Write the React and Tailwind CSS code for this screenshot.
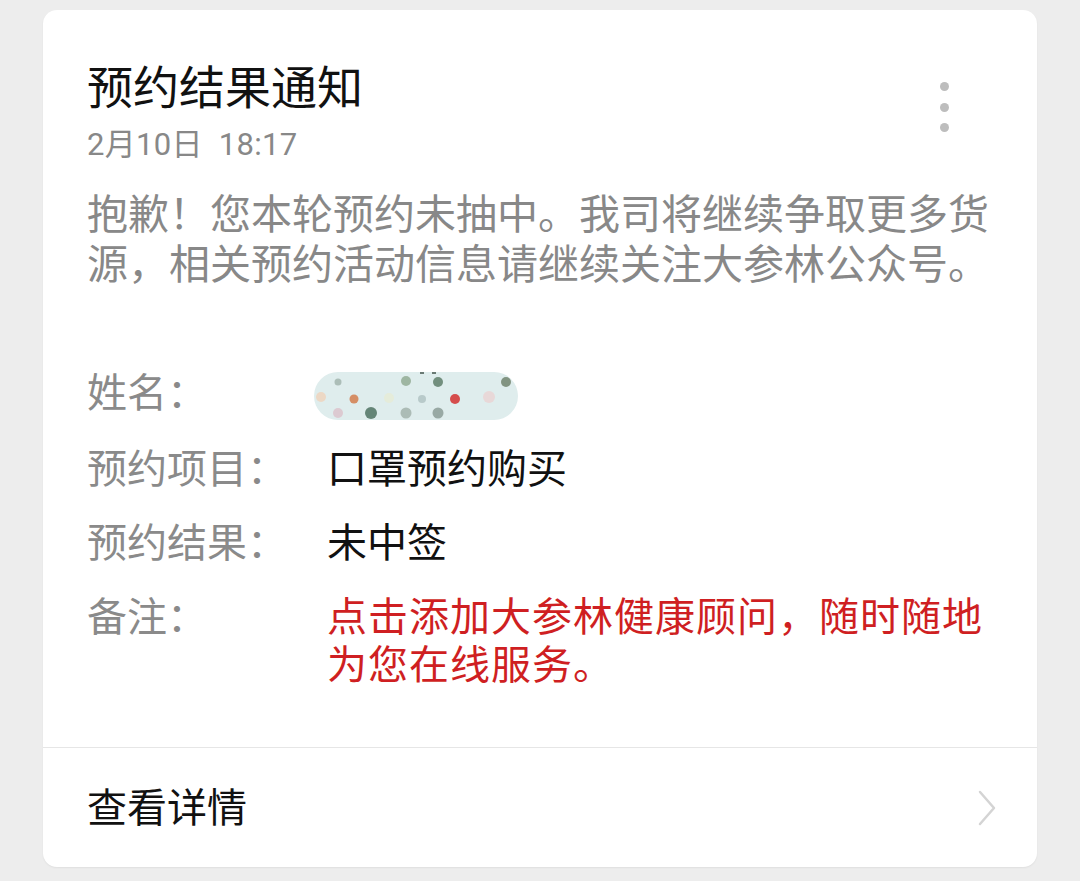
import React from "react";

const nameDots = [
  { x: 24, y: 10, r: 3.5, c: "#a3b5ae" },
  { x: 92, y: 9, r: 5, c: "#93ab94" },
  { x: 124, y: 10, r: 5, c: "#5f7e6a" },
  { x: 192, y: 10, r: 5, c: "#72846f" },
  { x: 7, y: 25, r: 5, c: "#efd3bd" },
  { x: 40, y: 27, r: 4.5, c: "#d47c4c" },
  { x: 75, y: 26, r: 5, c: "#e6ebd6" },
  { x: 108, y: 27, r: 4, c: "#b2c3c3" },
  { x: 141, y: 27, r: 5, c: "#d3302f" },
  { x: 175, y: 25, r: 6, c: "#ead3d3" },
  { x: 24, y: 41, r: 5, c: "#dcc3cb" },
  { x: 57, y: 41, r: 6, c: "#4f7262" },
  { x: 92, y: 41, r: 5.5, c: "#a3b3ab" },
  { x: 124, y: 41, r: 5.5, c: "#8c9c96" },
];

function BlurredName() {
  return (
    <svg width="204" height="48" viewBox="0 0 204 48" className="block">
      <rect x="0" y="0" width="204" height="48" rx="24" fill="#dfeded" />
      {nameDots.map((d, i) => (
        <circle key={i} cx={d.x} cy={d.y} r={d.r} fill={d.c} opacity="0.85" />
      ))}
      <rect x="106" y="0" width="4" height="2" fill="#6a7a74" />
      <rect x="118" y="0" width="4" height="2" fill="#6a7a74" />
    </svg>
  );
}

function Row({ label, children, className = "" }) {
  return (
    <div className={`flex ${className}`}>
      <div className="w-[240px] shrink-0 text-[40px] leading-[48px] text-[#8a8a8a]">{label}</div>
      <div className="flex-1 text-[40px] leading-[48px]">{children}</div>
    </div>
  );
}

export default function App() {
  return (
    <div
      className="min-h-[881px] bg-[#ededed] pt-[10px] pl-[43px]"
      style={{ fontFamily: 'Roboto, "Noto Sans CJK SC", sans-serif' }}
    >
      <div className="w-[994px] bg-white rounded-[14px] shadow-[0_1px_2px_rgba(0,0,0,0.06)]">
        <div className="pt-[50px] pl-[44px] pr-[45px]">
          {/* header */}
          <div className="flex justify-between items-start">
            <div>
              <div className="text-[46px] leading-[56px] text-[#111]">预约结果通知</div>
              <div className="mt-[9px] text-[31px] leading-[40px] text-[#888] tracking-[0.3px]">
                2月10日&nbsp;&nbsp;18:17
              </div>
            </div>
            <div className="flex flex-col gap-[11.5px] pt-[22px] mr-[43px]">
              <span className="w-[9px] h-[9px] rounded-full bg-[#bdbdbd]" />
              <span className="w-[9px] h-[9px] rounded-full bg-[#bdbdbd]" />
              <span className="w-[9px] h-[9px] rounded-full bg-[#bdbdbd]" />
            </div>
          </div>

          <p className="mt-[25px] text-[41px] leading-[50px] text-[#888]">
            抱歉！您本轮预约未抽中。我司将继续争取更多货源，相关预约活动信息请继续关注大参林公众号。
          </p>

          {/* fields */}
          <div className="mt-[80px] flex flex-col gap-[26px]">
            <Row label="姓名：">
              <div className="ml-[-13px] pt-[2px]">
                <BlurredName />
              </div>
            </Row>
            <Row label="预约项目：">
              <span className="text-[#111]">口罩预约购买</span>
            </Row>
            <Row label="预约结果：">
              <span className="text-[#111]">未中签</span>
            </Row>
            <Row label="备注：">
              <span className="text-[#cf1f22] tracking-[1px]">
                点击添加大参林健康顾问，随时随地为您在线服务。
              </span>
            </Row>
          </div>
        </div>

        <div className="mt-[57px] border-t border-[#e6e6e6]" />

        <div className="h-[119px] flex items-center justify-between pl-[44px] pr-[40px]">
          <span className="text-[40px] leading-[48px] text-[#111] mt-[3px]">查看详情</span>
          <svg width="20" height="36" viewBox="0 0 20 36" fill="none">
            <polyline points="3,2 17,18 3,34" stroke="#d4d4d4" strokeWidth="2.5" strokeLinecap="round" strokeLinejoin="round" />
          </svg>
        </div>
      </div>
    </div>
  );
}
